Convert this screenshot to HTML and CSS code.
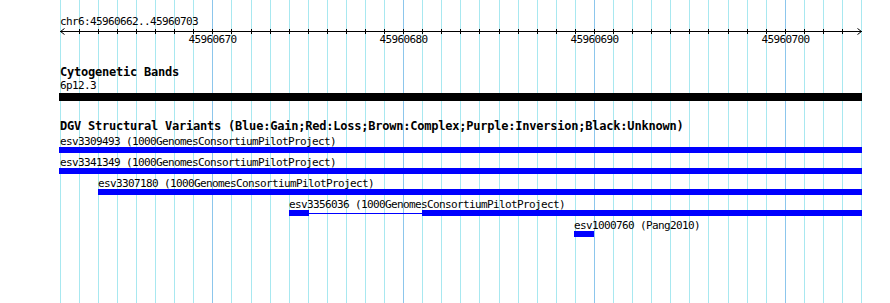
FILE: index.html
```html
<!DOCTYPE html>
<html lang="en">
<head>
    <meta charset="UTF-8">
    <title>chr6:45960662..45960703</title>
    <link rel="stylesheet" href="styles.css">
</head>
<body>
    <div class="panel">
        <svg id="grid" class="grid" width="890" height="303"></svg>

        <div class="content">
            <div class="ruler">
                <div class="ruler-label">chr6:45960662..45960703</div>
                <svg id="axis" class="axis" width="890" height="5"></svg>
                <div id="tick-labels" class="tick-labels"></div>
            </div>

            <div class="track track-cyto">
                <div class="track-title">Cytogenetic Bands</div>
                <div class="band-label">6p12.3</div>
                <div class="band-bar"></div>
            </div>

            <div class="track track-dgv">
                <div class="track-title">DGV Structural Variants (Blue:Gain;Red:Loss;Brown:Complex;Purple:Inversion;Black:Unknown)</div>
                <div class="features">
                    <div class="feature">
                        <div class="feature-label" style="margin-left: 60px">esv3309493 (1000GenomesConsortiumPilotProject)</div>
                        <div class="bar" style="margin-left: 59px; width: 803px"></div>
                    </div>
                    <div class="feature">
                        <div class="feature-label" style="margin-left: 60px">esv3341349 (1000GenomesConsortiumPilotProject)</div>
                        <div class="bar" style="margin-left: 59px; width: 803px"></div>
                    </div>
                    <div class="feature">
                        <div class="feature-label" style="margin-left: 98px">esv3307180 (1000GenomesConsortiumPilotProject)</div>
                        <div class="bar" style="margin-left: 98px; width: 764px"></div>
                    </div>
                    <div class="feature">
                        <div class="feature-label" style="margin-left: 289px">esv3356036 (1000GenomesConsortiumPilotProject)</div>
                        <div class="bar-split" style="margin-left: 289px">
                            <div class="segment" style="width: 20px"></div>
                            <div class="gap-line" style="width: 113px"></div>
                            <div class="segment" style="width: 440px"></div>
                        </div>
                    </div>
                    <div class="feature">
                        <div class="feature-label" style="margin-left: 574px">esv1000760 (Pang2010)</div>
                        <div class="bar" style="margin-left: 574px; width: 20px"></div>
                    </div>
                </div>
            </div>
        </div>
    </div>

    <script src="script.js"></script>
</body>
</html>
```

FILE: styles.css
```css
:root {
    --grid-minor: #a8e8f0;
    --grid-major: #8cc6ec;
    --feature-color: #0000ff;
    --text-color: #000;
}

body {
    margin: 0;
    padding: 0;
    background: #fff;
    font-family: 'DejaVu Sans Mono', 'Liberation Mono', monospace;
    color: var(--text-color);
}

.panel {
    position: relative;
    width: 890px;
    height: 303px;
    overflow: hidden;
}

.grid {
    position: absolute;
    top: 0;
    left: 0;
}

.content {
    position: relative;
    padding-top: 15px;
}

/* ruler */

.ruler-label,
.band-label,
.feature-label {
    font-size: 11px;
    letter-spacing: -0.62px;
    line-height: 13px;
    white-space: nowrap;
}

.ruler-label {
    margin-left: 60px;
}

.axis {
    display: block;
    overflow: visible;
}

.tick-labels {
    position: relative;
    height: 13px;
}

.tick-label {
    position: absolute;
    top: 0;
    font-size: 11px;
    letter-spacing: -0.62px;
    line-height: 13px;
    transform: translateX(-50%);
}

/* tracks */

.track-title {
    font-size: 12px;
    font-weight: bold;
    letter-spacing: -0.22px;
    line-height: 13px;
    white-space: nowrap;
    margin-left: 60px;
}

.track-cyto {
    margin-top: 20px;
}

.band-label {
    margin-left: 60px;
}

.band-bar {
    margin-top: 1px;
    margin-left: 59px;
    width: 803px;
    height: 8px;
    background: #000;
}

.track-dgv {
    margin-top: 19px;
}

.features {
    margin-top: 2px;
}

.feature {
    height: 21px;
}

.bar {
    margin-top: -1px;
    height: 6px;
    background: var(--feature-color);
}

.bar-split {
    margin-top: -1px;
    display: flex;
    align-items: center;
    height: 6px;
}

.segment {
    height: 6px;
    background: var(--feature-color);
}

.gap-line {
    height: 1px;
    background: var(--feature-color);
}
```

FILE: script.js
```js
// 42 bp shown across the panel, one grid line per base
const START = 45960662;
const BASES = 42;
const LEFT = 59.7;
const STEP = 19.08;

const NS = 'http://www.w3.org/2000/svg';

function xAt(i) {
    return Math.round(LEFT + i * STEP);
}

function line(svg, x1, y1, x2, y2, color) {
    const el = document.createElementNS(NS, 'line');
    el.setAttribute('x1', x1);
    el.setAttribute('y1', y1);
    el.setAttribute('x2', x2);
    el.setAttribute('y2', y2);
    el.setAttribute('stroke', color);
    el.setAttribute('stroke-width', 1);
    el.setAttribute('shape-rendering', 'crispEdges');
    svg.appendChild(el);
}

const grid = document.getElementById('grid');
const axis = document.getElementById('axis');
const labels = document.getElementById('tick-labels');

for (let i = 0; i <= BASES; i++) {
    const pos = START + i;
    const x = xAt(i) + 0.5;
    const major = pos % 10 === 0;

    line(grid, x, 0, x, 303, major ? '#8cc6ec' : '#a8e8f0');

    if (i > 0 && i < BASES) {
        line(axis, x, 1, x, 6, '#000');
    }

    if (major) {
        const label = document.createElement('div');
        label.className = 'tick-label';
        label.style.left = (xAt(i) + 0.5) + 'px';
        label.textContent = pos;
        labels.appendChild(label);
    }
}

// axis line with arrow heads at both ends
line(axis, 60, 3.5, 862, 3.5, '#000');

const arrows = document.createElementNS(NS, 'path');
arrows.setAttribute('d', 'M64.5 0.5 L60.5 3.5 L64.5 6.5 M857.5 0.5 L861.5 3.5 L857.5 6.5');
arrows.setAttribute('stroke', '#000');
arrows.setAttribute('fill', 'none');
arrows.setAttribute('stroke-width', 1);
axis.appendChild(arrows);
```
